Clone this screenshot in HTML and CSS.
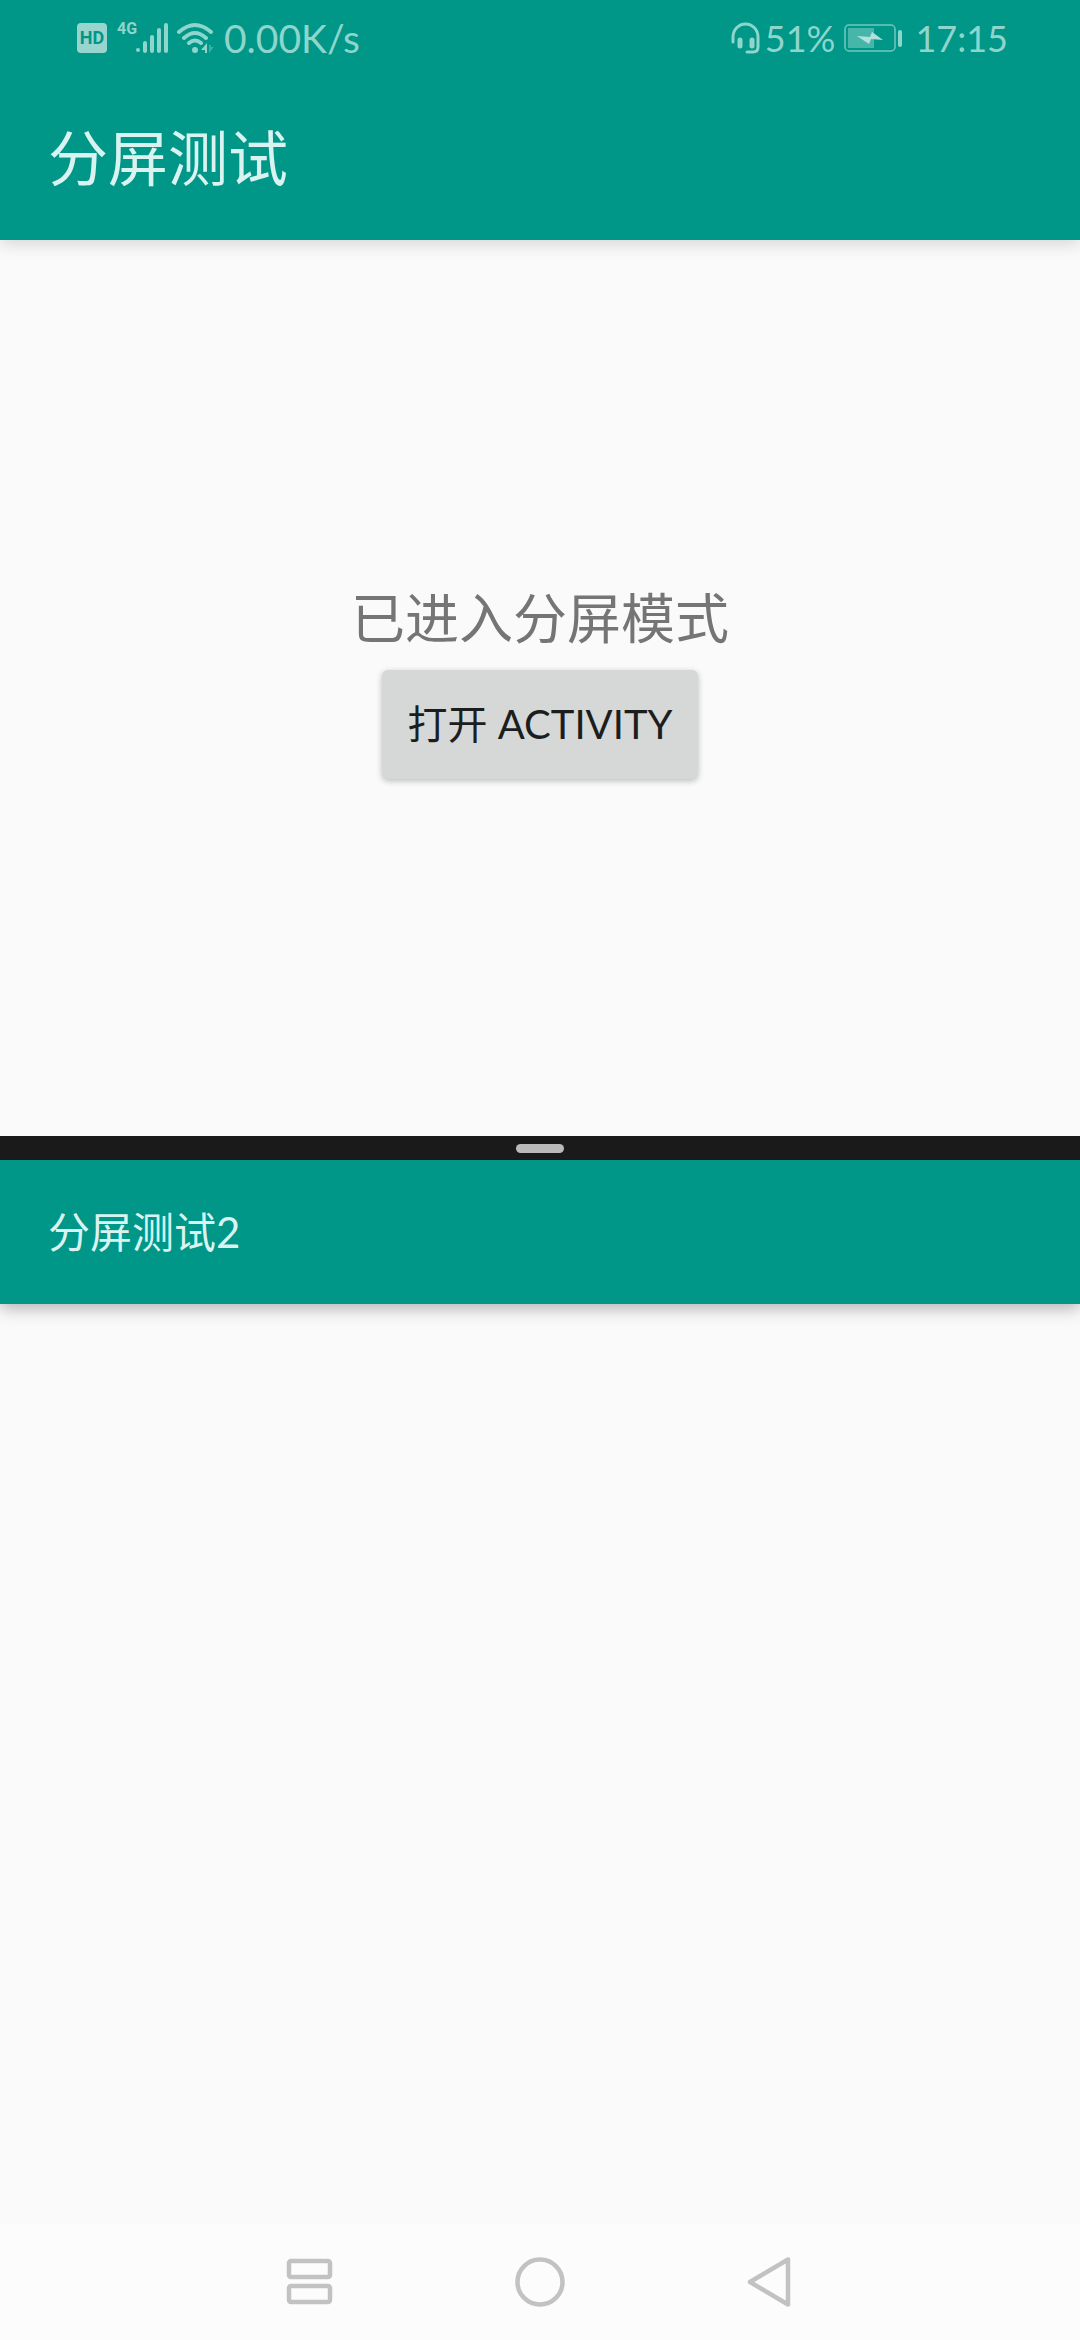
FILE: index.html
```html
<!DOCTYPE html>
<html lang="zh-CN">
<head>
<meta charset="utf-8">
<meta name="viewport" content="width=device-width, initial-scale=1">
<title>分屏测试</title>
<link rel="stylesheet" href="styles.css">
</head>
<body>
<section class="pane pane-top">
  <div class="status-bar">
    <div class="status-group">
      <span class="hd-badge">HD</span>
      <div class="signal">
        <span class="network">4G</span>
        <svg class="bars" width="34" height="32" viewBox="0 0 34 32" aria-hidden="true">
          <g stroke="currentColor" stroke-width="4" stroke-linecap="round">
            <path d="M3 28v0M10 21v8M17 15v14M24 8v21M31 3v26"/>
          </g>
        </svg>
      </div>
      <svg class="wifi" width="38" height="32" viewBox="0 0 38 32" aria-hidden="true">
        <g fill="none" stroke="currentColor" stroke-width="4" stroke-linecap="round">
          <path d="M3 10Q19 -4 35 10M8 16Q19 6 30 16M13 21Q19 16 25 21"/>
        </g>
        <circle cx="19" cy="28" r="3" fill="currentColor"/>
        <path d="M25 28l6-7v10h-2v-3z" fill="currentColor"/>
        <path d="M33 23v8l5-6h-3v-2z" fill="currentColor" opacity=".4"/>
      </svg>
      <span class="status-text">0.00K/s</span>
    </div>
    <div class="status-group">
      <svg width="30" height="32" viewBox="0 0 30 32" aria-hidden="true">
        <path d="M2 20v-5a12.500 13 0 0 1 25 0v10q0 5-5 5h-6" fill="none" stroke="currentColor" stroke-width="3" stroke-linecap="round"/>
        <path d="M9 18v6M21 18v6" stroke="currentColor" stroke-width="5" stroke-linecap="round"/>
      </svg>
      <span class="status-text status-compact percent">51%</span>
      <svg class="battery" width="58" height="28" viewBox="0 0 58 28" aria-hidden="true">
        <rect x="1" y="1" width="50" height="26" rx="4" fill="none" stroke="currentColor" stroke-width="1.5" opacity=".8"/>
        <rect x="4" y="4" width="26" height="20" fill="currentColor" opacity=".5"/>
        <path d="M13 12l13 1 2-5 11 8-12-1-2 5z" fill="#b2e0db"/>
        <rect x="54" y="6" width="4" height="17" rx="2" fill="currentColor"/>
      </svg>
      <span class="status-text status-compact">17:15</span>
    </div>
  </div>
  <header class="app-bar app-bar-large"><h1 class="title title-large">分屏测试</h1></header>
  <main class="content">
    <p class="message">已进入分屏模式</p>
    <button class="open-button" type="button">打开 ACTIVITY</button>
  </main>
</section>
<div class="divider"><span class="handle"></span></div>
<section class="pane pane-bottom">
  <header class="app-bar"><h2 class="title">分屏测试2</h2></header>
</section>
<nav class="nav-bar">
  <button class="nav-button" type="button" aria-label="分屏">
    <svg width="50" height="50" viewBox="0 0 50 50" fill="none" stroke="currentColor" stroke-width="4.5">
      <rect x="4" y="4" width="41" height="16" rx="2"/>
      <rect x="4" y="29" width="41" height="16" rx="2"/>
    </svg>
  </button>
  <button class="nav-button" type="button" aria-label="主页">
    <svg width="50" height="50" viewBox="0 0 50 50" fill="none" stroke="currentColor" stroke-width="4.5">
      <circle cx="25" cy="25" r="22.5"/>
    </svg>
  </button>
  <button class="nav-button" type="button" aria-label="返回">
    <svg width="50" height="50" viewBox="0 0 50 50" fill="none" stroke="currentColor" stroke-width="4.5" stroke-linejoin="round">
      <path d="M43 2.500V47.500L5 25z"/>
    </svg>
  </button>
</nav>
</body>
</html>
```

FILE: styles.css
```css
* {
  box-sizing: border-box;
}

body {
  margin: 0;
  min-height: 100vh;
  display: flex;
  flex-direction: column;
  background: #fafafa;
  font-family: Lato, "Noto Sans CJK SC", sans-serif;
}

svg {
  display: block;
  flex: none;
}

.pane {
  display: flex;
  flex-direction: column;
  flex-basis: 0;
}

.pane-top {
  flex-grow: 1136;
}

.pane-bottom {
  flex-grow: 1064;
}

.status-bar {
  position: relative;
  z-index: 1;
  display: flex;
  justify-content: space-between;
  height: 76px;
  padding: 0 72px 0 77px;
  background: #009688;
  color: #8ed5cc;
}

.status-group {
  display: flex;
  align-items: center;
}

.status-text {
  font-size: 39px;
  line-height: 74px;
  font-weight: 400;
}

.status-compact {
  font-size: 36px;
}

.hd-badge {
  width: 30px;
  height: 30px;
  border-radius: 4px;
  background: #99d5cf;
  color: #009688;
  font: bold 18px/30px Roboto, sans-serif;
  text-align: center;
}

.signal {
  display: flex;
  align-items: flex-start;
  margin-left: 10px;
}

.network {
  width: 18px;
  font: bold 16px/14px "Liberation Sans Narrow", Roboto, sans-serif;
}

.wifi {
  margin: 0 10px 0 7px;
}

.percent {
  margin: 0 9px 0 4px;
}

.battery {
  margin-right: 13px;
}

.app-bar {
  display: flex;
  align-items: center;
  height: 144px;
  padding: 0 48px;
  background: #009688;
  color: #d9f3f0;
  box-shadow: 0 4px 16px rgba(0, 0, 0, 0.3);
}

.app-bar-large {
  height: 164px;
  box-shadow: 0 4px 16px rgba(0, 0, 0, 0.15);
}

.title {
  margin: 0;
  font-size: 42px;
  line-height: 60px;
  font-weight: 400;
}

.title-large {
  font-size: 60px;
  line-height: 84px;
}

.content {
  flex: 1;
  display: flex;
  flex-direction: column;
  align-items: center;
  justify-content: center;
}

.message {
  margin: 0;
  padding-top: 3px;
  font-size: 54px;
  line-height: 73px;
  color: #757575;
}

.open-button {
  margin: 15px 18px 18px;
  padding: 24px 26px;
  border: 0;
  border-radius: 6px;
  background: #d6d8d7;
  box-shadow: 0 2px 6px rgba(0, 0, 0, 0.25);
  color: #1c1e1d;
  font: inherit;
  font-size: 40px;
  line-height: 61px;
}

.divider {
  display: flex;
  align-items: center;
  justify-content: center;
  height: 24px;
  background: #1a1a1a;
  position: relative;
}

.handle {
  width: 48px;
  height: 9px;
  border-radius: 5px;
  background: #bababa;
}

.nav-bar {
  display: flex;
  align-items: center;
  justify-content: center;
  gap: 180px;
  height: 116px;
  background: #fcfcfc;
  color: #c2c2c2;
}

.nav-button {
  padding: 0;
  border: 0;
  background: none;
  color: inherit;
}
```
